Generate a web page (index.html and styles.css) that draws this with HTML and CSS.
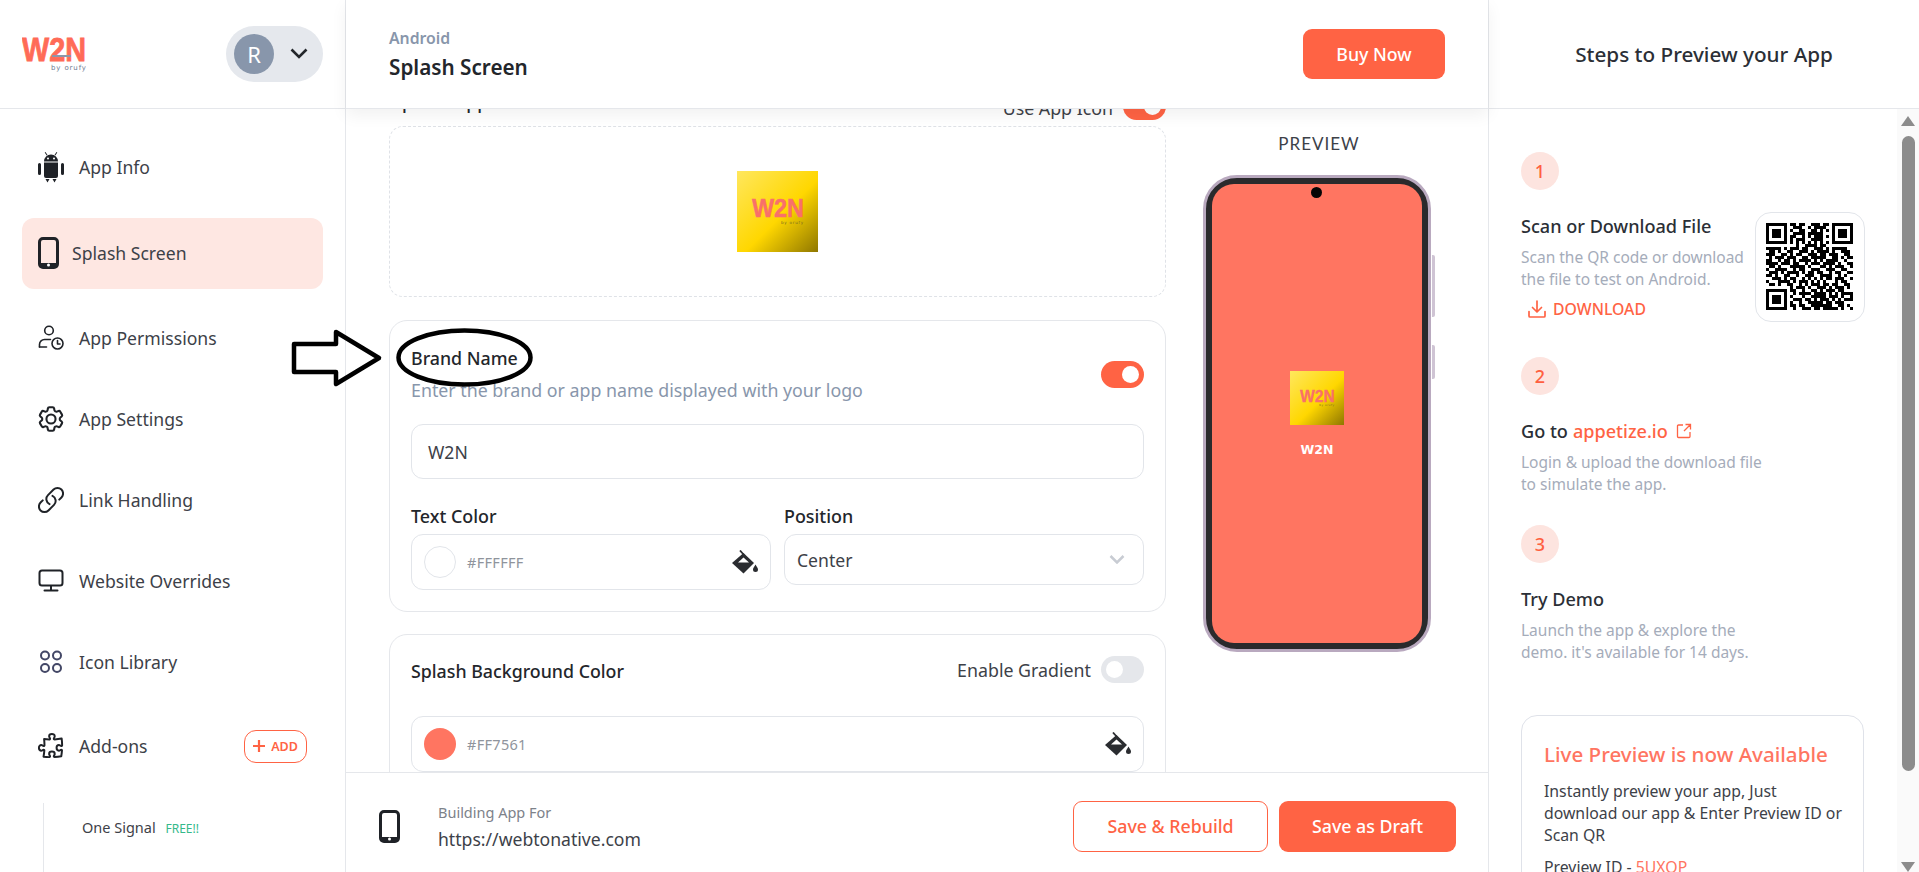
FILE: index.html
```html
<!DOCTYPE html>
<html lang="en">
<head>
<meta charset="utf-8">
<title>Splash Screen</title>
<link rel="stylesheet" href="styles.css">
</head>
<body>
<div class="app">
  <aside class="sidebar">
    <div class="brandbar">
      <svg class="logo" viewBox="0 -6 64 44" aria-label="W2N by orufy">
        <text class="logo-mark" x="0" y="25" textLength="64" lengthAdjust="spacingAndGlyphs">W2N</text>
        <rect class="logo-bar" x="30" y="19" width="19" height="2"/>
        <text class="logo-sub" x="29" y="34" textLength="35">by orufy</text>
      </svg>
      <div class="account">
        <span class="avatar">R</span>
        <svg class="chev" viewBox="0 0 18 11"><path d="M1.500 1.500 9 9l7.500-7.500"/></svg>
      </div>
    </div>
    <nav class="nav">
      <a class="item">
        <svg class="ic" viewBox="0 0 26 32"><path class="fill" d="M6 10.500a7 7 0 0 1 14 0zM6 11.500h14V25a2 2 0 0 1-2 2H8a2 2 0 0 1-2-2zM0 13.500a1.500 1.500 0 0 1 3 0v9a1.500 1.500 0 0 1-3 0zM23 13.500a1.500 1.500 0 0 1 3 0v9a1.500 1.500 0 0 1-3 0zM7.500 28h4l-2 3.500zM14.500 28h4l-2 3.500zM7.500 1l2 3-.8.500-2-3zM18.500 1l-2 3 .8.500 2-3z"/><circle class="eye" cx="10" cy="7.500" r="1"/><circle class="eye" cx="16" cy="7.500" r="1"/></svg>
        <span>App Info</span>
      </a>
      <a class="item active">
        <svg class="ic ic-phone" viewBox="0 0 21 32"><rect class="line thick" x="1.500" y="1.500" width="18" height="29" rx="3.500"/><path class="fill" d="M1 26h19v2a3 3 0 0 1-3 3H4a3 3 0 0 1-3-3z"/><circle class="eye" cx="10.500" cy="28" r="1.500"/></svg>
        <span>Splash Screen</span>
      </a>
      <a class="item">
        <svg class="ic" viewBox="0 0 26 26"><circle class="line" cx="11" cy="5.500" r="4.300"/><path class="line" d="M1.500 22v-2.500c0-3 2.500-5 5-5h6"/><path class="line" d="M1.500 22h7"/><circle class="line" cx="19.500" cy="18.500" r="5.500"/><path class="line" d="M19.500 15.500v3.500h2.500"/></svg>
        <span>App Permissions</span>
      </a>
      <a class="item">
        <svg class="ic" viewBox="2 2 20 20"><path class="line" d="M9.594 3.940c.09-.542.56-.94 1.110-.94h2.593c.55 0 1.020.398 1.110.94l.213 1.281c.063.374.313.686.645.87.074.04.147.083.22.127.324.196.72.257 1.075.124l1.217-.456a1.125 1.125 0 011.370.49l1.296 2.247a1.125 1.125 0 01-.26 1.431l-1.003.827c-.293.24-.438.613-.431.992a6.759 6.759 0 010 .255c-.007.378.138.75.43.99l1.005.828c.424.35.534.954.26 1.430l-1.298 2.247a1.125 1.125 0 01-1.369.491l-1.217-.456c-.355-.133-.75-.072-1.076.124a6.570 6.570 0 01-.22.128c-.331.183-.581.495-.644.869l-.213 1.280c-.09.543-.56.941-1.110.941h-2.594c-.55 0-1.020-.398-1.110-.94l-.213-1.281c-.062-.374-.312-.686-.644-.87a6.520 6.520 0 01-.22-.127c-.325-.196-.72-.257-1.076-.124l-1.217.456a1.125 1.125 0 01-1.369-.49l-1.297-2.247a1.125 1.125 0 01.26-1.431l1.004-.827c.292-.24.437-.613.43-.992a6.932 6.932 0 010-.255c.007-.378-.138-.75-.43-.99l-1.004-.828a1.125 1.125 0 01-.26-1.430l1.297-2.247a1.125 1.125 0 011.370-.491l1.216.456c.356.133.751.072 1.076-.124.072-.044.146-.087.22-.128.332-.183.582-.495.644-.869l.214-1.281z"/><circle class="line" cx="12" cy="12" r="3.500"/></svg>
        <span>App Settings</span>
      </a>
      <a class="item">
        <svg class="ic" viewBox="1.500 1.500 21 21"><path class="line" d="M13.190 8.688a4.500 4.500 0 011.242 7.244l-4.500 4.500a4.500 4.500 0 01-6.364-6.364l1.757-1.757m13.350-.622l1.757-1.757a4.500 4.500 0 00-6.364-6.364l-4.500 4.500a4.500 4.500 0 001.242 7.244"/></svg>
        <span>Link Handling</span>
      </a>
      <a class="item">
        <svg class="ic" viewBox="0 0 26 24"><rect class="line heavy" x="1.500" y="1.500" width="23" height="15" rx="2.500"/><path class="line heavy" d="M13 17v4M6.500 21.500h13"/></svg>
        <span>Website Overrides</span>
      </a>
      <a class="item">
        <svg class="ic" viewBox="0 0 26 26"><g class="dots"><circle cx="7" cy="6.500" r="4"/><circle cx="19" cy="6.500" r="4"/><circle cx="7" cy="19" r="4"/><circle cx="19" cy="19" r="4"/></g></svg>
        <span>Icon Library</span>
      </a>
      <a class="item addon">
        <svg class="ic" viewBox="1.500 1.500 21 21"><path class="line" d="M14.250 6.087c0-.355.186-.676.401-.959.221-.29.349-.634.349-1.003 0-1.036-1.007-1.875-2.250-1.875s-2.250.84-2.250 1.875c0 .369.128.713.349 1.003.215.283.401.604.401.959a.64.64 0 01-.657.643 48.390 48.390 0 01-4.163-.3c.186 1.613.293 3.250.315 4.907a.656.656 0 01-.658.663c-.355 0-.676-.186-.959-.401a1.647 1.647 0 00-1.003-.349c-1.036 0-1.875 1.007-1.875 2.250s.84 2.250 1.875 2.250c.369 0 .713-.128 1.003-.349.283-.215.604-.401.959-.401.31 0 .555.26.532.57a48.039 48.039 0 01-.642 5.056c1.518.19 3.058.309 4.616.354a.64.64 0 00.657-.643c0-.355-.186-.676-.401-.959a1.647 1.647 0 01-.349-1.003c0-1.035 1.008-1.875 2.250-1.875 1.243 0 2.250.84 2.250 1.875 0 .369-.128.713-.349 1.003-.215.283-.4.604-.4.959 0 .333.277.599.61.58a48.100 48.100 0 005.427-.63 48.050 48.050 0 00.582-4.717.532.532 0 00-.533-.57c-.355 0-.676.186-.959.401-.29.221-.634.349-1.003.349-1.035 0-1.875-1.007-1.875-2.250s.84-2.250 1.875-2.250c.37 0 .713.128 1.003.349.283.215.604.401.96.401a.656.656 0 00.658-.663 48.422 48.422 0 00-.37-5.360c-1.886.342-3.810.574-5.766.689a.578.578 0 01-.61-.58z"/></svg>
        <span>Add-ons</span>
        <span class="add"><svg class="plus" viewBox="0 0 12 12"><path d="M6 0v12M0 6h12"/></svg>ADD</span>
      </a>
      <div class="sublist">
        <div class="sub">One Signal <span class="free">FREE!!</span></div>
        <div class="sub">Orufy Connect</div>
      </div>
    </nav>
  </aside>

  <main class="main">
    <header class="topbar">
      <div>
        <div class="crumb">Android</div>
        <h1 class="page-title">Splash Screen</h1>
      </div>
      <button class="btn btn-primary btn-buy">Buy Now</button>
    </header>

    <div class="canvas">
      <section class="form">
        <div class="row-between">
          <span class="label label-clipped">Upload App Icon</span>
          <span class="toggle-line"><span class="toggle-text">Use App Icon</span> <span class="toggle on"></span></span>
        </div>
        <div class="dropzone">
          <svg class="app-img" viewBox="0 0 81 81" aria-label="App icon">
            <defs><linearGradient id="gold" x1="0" y1="0" x2="1" y2="1"><stop offset="0" stop-color="#ffe75e"/><stop offset=".55" stop-color="#ffd700"/><stop offset="1" stop-color="#8f7700"/></linearGradient></defs>
            <rect width="81" height="81" fill="url(#gold)"/>
            <text class="logo-mark tint" x="15" y="46" textLength="52" lengthAdjust="spacingAndGlyphs">W2N</text>
            <text class="img-sub" x="44" y="53" textLength="22">by orufy</text>
          </svg>
        </div>

        <div class="card">
          <div class="row-between">
            <div>
              <div class="label">Brand Name</div>
              <div class="hint">Enter the brand or app name displayed with your logo</div>
            </div>
            <span class="toggle on"></span>
          </div>
          <div class="field field-text">W2N</div>
          <div class="two-col">
            <div>
              <div class="field-label">Text Color</div>
              <div class="field field-color">
                <span class="swatch swatch-white"></span>
                <span class="hex">#FFFFFF</span>
                <svg class="bucket" viewBox="0 0 27 24"><path d="M9 .5 13 5"/><polygon points="12.500,3 23,13 12.500,23.500 1,13"/><polygon class="bucket-in" points="12.500,7.500 18,12.500 7,12.500"/><path class="drop" d="M24.500 14.500c-1.500 2.500-2.500 3.500-2.500 5a2.500 2.500 0 0 0 5 0c0-1.500-1-2.500-2.500-5z"/></svg>
              </div>
            </div>
            <div>
              <div class="field-label">Position</div>
              <div class="field field-select">
                <span>Center</span>
                <svg class="select-chev" viewBox="0 0 16 9"><path d="M1.500 1 8 7.500 14.500 1"/></svg>
              </div>
            </div>
          </div>
        </div>

        <div class="card card-bg">
          <div class="row-between">
            <span class="label">Splash Background Color</span>
            <span class="toggle-line">Enable Gradient <span class="toggle"></span></span>
          </div>
          <div class="field field-color field-bg">
            <span class="swatch swatch-coral"></span>
            <span class="hex">#FF7561</span>
            <svg class="bucket" viewBox="0 0 27 24"><path d="M9 .5 13 5"/><polygon points="12.500,3 23,13 12.500,23.500 1,13"/><polygon class="bucket-in" points="12.500,7.500 18,12.500 7,12.500"/><path class="drop" d="M24.500 14.500c-1.500 2.500-2.500 3.500-2.500 5a2.500 2.500 0 0 0 5 0c0-1.500-1-2.500-2.500-5z"/></svg>
          </div>
        </div>
      </section>

      <section class="preview">
        <div class="preview-title">PREVIEW</div>
        <div class="phone">
          <span class="side side-a"></span>
          <span class="side side-b"></span>
          <div class="screen">
            <span class="camera"></span>
            <svg class="screen-img" viewBox="0 0 81 81" aria-label="App icon">
              <rect width="81" height="81" fill="url(#gold)"/>
              <text class="logo-mark tint" x="15" y="46" textLength="52" lengthAdjust="spacingAndGlyphs">W2N</text>
              <text class="img-sub" x="44" y="53" textLength="22">by orufy</text>
            </svg>
            <div class="screen-name">W2N</div>
          </div>
        </div>
      </section>
    </div>

    <footer class="footer">
      <svg class="foot-phone" viewBox="0 0 21 33"><rect class="line thick" x="1.500" y="1.500" width="18" height="30" rx="3.500"/><path class="fill" d="M1 27h19v2a3 3 0 0 1-3 3H4a3 3 0 0 1-3-3z"/><circle class="eye" cx="10.500" cy="29" r="1.500"/></svg>
      <div class="foot-text">
        <div class="foot-small">Building App For</div>
        <div class="foot-url">https://webtonative.com</div>
      </div>
      <div class="foot-actions">
        <button class="btn btn-outline">Save &amp; Rebuild</button>
        <button class="btn btn-primary btn-draft">Save as Draft</button>
      </div>
    </footer>
  </main>

  <aside class="steps">
    <div class="steps-head">Steps to Preview your App</div>
    <div class="steps-body">
      <div class="steps-scroll">
        <div class="num">1</div>
        <div class="step-one">
          <div class="step-one-text">
            <div class="step-name">Scan or Download File</div>
            <p class="step-desc">Scan the QR code or download<br>the file to test on Android.</p>
            <a class="download">
              <svg class="dl-ic" viewBox="0 0 18 18"><path d="M9 1v10.500M4.500 7.500 9 12l4.500-4.500M1 11.500V16a1 1 0 0 0 1 1h14a1 1 0 0 0 1-1v-4.500"/></svg>
              DOWNLOAD
            </a>
          </div>
          <div class="qr-box">
            <svg class="qr" viewBox="0 0 29 29" aria-label="QR code"><path d="M0 .5h7M8 .5h2M11 .5h2M15 .5h3M19 .5h2M22 .5h7M0 1.500h1M6 1.500h1M9 1.500h3M14 1.500h1M16 1.500h4M22 1.500h1M28 1.500h1M0 2.500h1M2 2.500h3M6 2.500h1M8 2.500h1M11 2.500h2M15 2.500h2M18 2.500h1M20 2.500h1M22 2.500h1M24 2.500h3M28 2.500h1M0 3.500h1M2 3.500h3M6 3.500h1M9 3.500h4M14 3.500h5M22 3.500h1M24 3.500h3M28 3.500h1M0 4.500h1M2 4.500h3M6 4.500h1M8 4.500h2M12 4.500h1M14 4.500h1M16 4.500h3M20 4.500h1M22 4.500h1M24 4.500h3M28 4.500h1M0 5.500h1M6 5.500h1M8 5.500h1M10 5.500h3M15 5.500h4M22 5.500h1M28 5.500h1M0 6.500h7M8 6.500h1M10 6.500h1M12 6.500h1M14 6.500h1M16 6.500h1M18 6.500h1M20 6.500h1M22 6.500h7M10 7.500h1M13 7.500h4M18 7.500h2M0 8.500h5M6 8.500h1M8 8.500h3M12 8.500h2M16 8.500h3M20 8.500h1M22 8.500h5M1 9.500h2M4 9.500h1M7 9.500h2M11 9.500h3M15 9.500h1M17 9.500h4M22 9.500h1M25 9.500h3M0 10.500h3M5 10.500h2M8 10.500h1M10 10.500h2M14 10.500h3M18 10.500h2M21 10.500h3M26 10.500h2M1 11.500h1M3 11.500h3M7 11.500h3M12 11.500h2M15 11.500h5M22 11.500h2M25 11.500h1M27 11.500h2M0 12.500h2M4 12.500h1M6 12.500h2M9 12.500h1M11 12.500h4M16 12.500h1M18 12.500h1M20 12.500h4M26 12.500h1M0 13.500h4M5 13.500h3M9 13.500h2M13 13.500h1M15 13.500h3M19 13.500h4M24 13.500h1M27 13.500h2M1 14.500h2M4 14.500h1M8 14.500h5M14 14.500h1M18 14.500h2M21 14.500h1M23 14.500h3M28 14.500h1M0 15.500h1M3 15.500h4M9 15.500h1M11 15.500h2M15 15.500h3M20 15.500h3M25 15.500h2M1 16.500h3M5 16.500h1M7 16.500h4M12 16.500h1M14 16.500h2M17 16.500h2M21 16.500h1M23 16.500h2M27 16.500h2M0 17.500h2M3 17.500h1M6 17.500h2M10 17.500h1M13 17.500h3M18 17.500h4M24 17.500h1M26 17.500h1M2 18.500h3M6 18.500h1M8 18.500h2M12 18.500h1M14 18.500h1M16 18.500h1M18 18.500h1M20 18.500h2M23 18.500h3M28 18.500h1M0 19.500h1M4 19.500h4M9 19.500h1M11 19.500h3M15 19.500h1M17 19.500h1M19 19.500h1M23 19.500h1M25 19.500h2M1 20.500h2M4 20.500h1M7 20.500h2M11 20.500h1M13 20.500h1M15 20.500h3M19 20.500h2M22 20.500h2M26 20.500h2M8 21.500h1M10 21.500h3M14 21.500h1M17 21.500h3M21 21.500h1M23 21.500h3M27 21.500h1M0 22.500h7M8 22.500h2M12 22.500h1M15 22.500h2M18 22.500h1M20 22.500h3M24 22.500h2M0 23.500h1M6 23.500h1M9 23.500h1M11 23.500h4M16 23.500h4M21 23.500h1M23 23.500h1M25 23.500h4M0 24.500h1M2 24.500h3M6 24.500h1M8 24.500h1M12 24.500h1M15 24.500h5M21 24.500h3M25 24.500h1M28 24.500h1M0 25.500h1M2 25.500h3M6 25.500h1M9 25.500h3M13 25.500h2M16 25.500h1M18 25.500h3M22 25.500h1M24 25.500h1M26 25.500h3M0 26.500h1M2 26.500h3M6 26.500h1M8 26.500h1M11 26.500h1M14 26.500h5M20 26.500h2M23 26.500h3M0 27.500h1M6 27.500h1M8 27.500h2M11 27.500h2M15 27.500h7M24 27.500h2M27 27.500h1M0 28.500h7M9 28.500h1M12 28.500h3M16 28.500h2M19 28.500h5M25 28.500h1M28 28.500h1"/></svg>
          </div>
        </div>

        <div class="num num-two">2</div>
        <div class="step-name step-gap">Go to <span class="coral">appetize.io</span>
          <svg class="ext" viewBox="0 0 16 16"><path d="M7 2H2.500A1 1 0 0 0 1.500 3v10.500a1 1 0 0 0 1 1H13a1 1 0 0 0 1-1V9M9.500 1.500h5v5M14.500 1.500 8 8"/></svg>
        </div>
        <p class="step-desc">Login &amp; upload the download file<br>to simulate the app.</p>

        <div class="num num-three">3</div>
        <div class="step-name step-gap">Try Demo</div>
        <p class="step-desc">Launch the app &amp; explore the<br>demo. it's available for 14 days.</p>

        <div class="live-card">
          <div class="live-title">Live Preview is now Available</div>
          <p class="live-text">Instantly preview your app, Just<br>download our app &amp; Enter Preview ID or<br>Scan QR</p>
          <p class="live-id">Preview ID - <span class="coral-soft">5UXOP</span></p>
        </div>
      </div>
      <div class="scrollbar">
        <span class="arrow arrow-up"></span>
        <span class="thumb"></span>
        <span class="arrow arrow-down"></span>
      </div>
    </div>
  </aside>
</div>

<svg class="annotation" viewBox="0 0 1919 872" aria-hidden="true">
  <polygon points="294,344 336,344 336,332 379,358 336,384 336,372 294,372"/>
  <ellipse cx="464.500" cy="357.500" rx="66" ry="27"/>
</svg>
</body>
</html>
```

FILE: styles.css
```css
* { box-sizing: border-box; }
html, body { margin: 0; height: 100%; }
body {
  font-family: "Noto Sans", "Open Sans", sans-serif;
  color: #2b2f36;
  background: #fff;
  overflow: hidden;
  position: relative;
}
p { margin: 0; }
button { font-family: inherit; cursor: pointer; }

.app { display: flex; height: 872px; width: 1919px; }

/* Shared icon parts */
.line { fill: none; stroke: #1f2227; stroke-width: 1.600; stroke-linecap: round; stroke-linejoin: round; }
.line.heavy { stroke-width: 2; }
.line.thick { stroke-width: 3; }
.fill { fill: #1f2227; }
.eye { fill: #fff; }

/* Sidebar */
.sidebar { width: 346px; flex: none; border-right: 1px solid #e5e7eb; overflow: hidden; }
.brandbar {
  height: 109px;
  border-bottom: 1px solid #e5e7eb;
  display: flex;
  align-items: center;
  justify-content: space-between;
  padding: 0 22px;
}
.logo { width: 64px; height: 44px; margin-top: -4px; }
.logo-mark { font-family: "Liberation Sans", sans-serif; font-weight: 700; font-size: 34px; fill: #ff6b57; stroke: #ff6b57; stroke-width: .8px; }
.logo-bar { fill: #8c97a8; }
.logo-sub { font-family: "DejaVu Sans", sans-serif; font-size: 7px; fill: #6d7c92; }
.account {
  width: 97px;
  height: 56px;
  margin-top: -1px;
  border-radius: 28px;
  background: #e5e8ed;
  display: flex;
  align-items: center;
  padding-left: 8px;
  gap: 16px;
}
.avatar {
  width: 40px;
  height: 40px;
  border-radius: 50%;
  background: #8896ab;
  color: #fff;
  font-size: 22px;
  display: flex;
  align-items: center;
  justify-content: center;
}
.chev { width: 18px; height: 11px; fill: none; stroke: #23262b; stroke-width: 2.600; }

.nav { padding: 23px 22px 0; display: flex; flex-direction: column; gap: 10px; }
.item {
  height: 71px;
  display: flex;
  align-items: center;
  gap: 15px;
  padding-left: 16px;
  padding-bottom: 1px;
  font-size: 17.600px;
  color: #3d4148;
  border-radius: 12px;
  flex: none;
}
.ic { width: 26px; height: 32px; flex: none; }
.item.active { background: #fee7e2; margin: 5px 0 4px; gap: 13px; }
.ic-phone { width: 21px; }
.dots { fill: none; stroke: #434766; stroke-width: 2; }
.addon { margin-top: 3px; height: 71px; position: relative; }
.add {
  margin-left: auto;
  margin-right: 16px;
  width: 63px;
  height: 33px;
  border: 1px solid #ff6344;
  border-radius: 12px;
  color: #ff6344;
  font-size: 12.500px;
  font-weight: 600;
  display: flex;
  align-items: center;
  justify-content: center;
  gap: 6px;
}
.plus { width: 12px; height: 12px; fill: none; stroke: #ff6344; stroke-width: 2.200; }
.sublist {
  margin: 11px 0 0 21px;
  padding: 12px 0 0 38px;
  border-left: 1px solid #e5e7eb;
  height: 100px;
  display: flex;
  flex-direction: column;
  gap: 24px;
}
.sub { font-size: 14.500px; line-height: 24px; color: #3d4148; }
.free { color: #34b98a; font-size: 12px; margin-left: 6px; }

/* Main column */
.main { width: 1143px; flex: none; display: flex; flex-direction: column; border-right: 1px solid #e5e7eb; }
.topbar {
  height: 109px;
  flex: none;
  display: flex;
  align-items: center;
  justify-content: space-between;
  padding: 0 43px 0 43px;
  border-bottom: 1px solid #e5e7eb;
  box-shadow: 0 6px 16px rgba(0, 0, 0, .06);
  background: #fff;
  position: relative;
  z-index: 2;
}
.crumb { font-size: 15.800px; font-weight: 600; color: #8896ab; line-height: 20px; }
.page-title { margin: 5px 0 0; font-size: 20.700px; font-weight: 600; line-height: 28px; color: #23262b; }
.btn { border-radius: 9px; font-size: 17.800px; font-weight: 500; height: 51px; }
.btn-primary { background: #ff6344; border: 0; color: #fff; }
.btn-buy { width: 142px; height: 50px; margin-top: -1px; }
.btn-draft { width: 177px; }
.btn-outline { width: 195px; background: #fff; border: 1px solid #ff6344; color: #ff6344; }

.canvas { flex: 1; min-height: 0; overflow: hidden; display: flex; padding-left: 43px; }
.form { width: 777px; flex: none; margin-top: -16px; }
.row-between { display: flex; justify-content: space-between; align-items: center; }
.label { font-size: 17.800px; font-weight: 500; line-height: 24px; color: #23262b; }
.label-clipped { align-self: flex-start; margin-top: -3px; }
.toggle-line { display: flex; align-items: center; gap: 10px; font-size: 17.800px; color: #3d4148; }
.toggle-text { margin-top: 3px; }
.toggle {
  width: 43px;
  height: 27px;
  border-radius: 14px;
  background: #e5e7eb;
  flex: none;
  display: flex;
  align-items: center;
  padding: 0 5px;
}
.toggle::after { content: ""; width: 17px; height: 17px; border-radius: 50%; background: #fff; }
.toggle.on { background: #ff6344; justify-content: flex-end; }

.dropzone {
  margin-top: 6px;
  height: 171px;
  border: 1px dashed #dfe2e7;
  border-radius: 14px;
  display: flex;
  justify-content: center;
  padding-top: 44px;
}
.app-img { width: 81px; height: 81px; }
.logo-mark.tint { font-size: 26px; fill: #f9706a; stroke: #f9706a; stroke-width: .5px; }
.img-sub { font-family: "DejaVu Sans", sans-serif; font-size: 4px; fill: #7a6a20; }

.card {
  margin-top: 22px;
  border: 1px solid #e5e7eb;
  border-radius: 18px;
  padding: 25px 21px 21px;
  height: 292px;
}
.form .dropzone + .card { margin-top: 23px; }
.hint { margin-top: 8px; font-size: 17.800px; line-height: 24px; color: #8896ab; }
.field {
  border: 1px solid #e2e5ea;
  border-radius: 12px;
  display: flex;
  align-items: center;
  font-size: 17.600px;
  color: #3d4148;
  background: #fff;
}
.field-text { margin-top: 22px; height: 55px; padding-left: 16px; }
.two-col { display: grid; grid-template-columns: 360px 360px; column-gap: 13px; margin-top: 25px; align-items: start; }
.field-label { font-size: 17.900px; font-weight: 500; line-height: 24px; margin-bottom: 6px; color: #23262b; }
.field-color { height: 56px; padding: 0 12px; }
.field-select { height: 51px; padding: 0 18px 0 12px; justify-content: space-between; }
.select-chev { width: 16px; height: 9px; fill: none; stroke: #c8ccd3; stroke-width: 2.500; }
.swatch { width: 32px; height: 32px; border-radius: 50%; flex: none; }
.swatch-white { background: #fff; border: 1px solid #e2e5ea; }
.swatch-coral { background: #ff7561; }
.hex { margin-left: 11px; font-size: 14.500px; color: #8f949c; letter-spacing: .3px; }
.bucket { width: 27px; height: 24px; margin-left: auto; fill: #2a2c30; stroke: none; }
.bucket > path:first-child { fill: none; stroke: #2a2c30; stroke-width: 1.800; }
.bucket-in { fill: #fff; }

.card-bg { padding: 21px 21px 0; height: 200px; }
.card-bg .label { margin-top: 3px; }
.field-bg { margin-top: 33px; }

/* Preview */
.preview { flex: 1; display: flex; flex-direction: column; padding-left: 37px; }
.preview-title {
  font-family: "Lato", sans-serif;
  font-size: 17px;
  letter-spacing: 1px;
  line-height: 20px;
  text-align: center;
  width: 232px;
  margin-top: 25px;
  color: #3d4148;
}
.phone {
  margin-top: 21px;
  width: 228px;
  height: 477px;
  padding: 6px;
  border: 3px solid #b9a9bf;
  border-radius: 34px;
  background: #2a2a2c;
  position: relative;
}
.side { position: absolute; left: 226px; width: 3px; background: #cfc4d4; border-radius: 0 2px 2px 0; }
.side-a { top: 77px; height: 62px; }
.side-b { top: 167px; height: 34px; }
.screen {
  height: 100%;
  border-radius: 22px;
  background: #ff7561;
  display: flex;
  flex-direction: column;
  align-items: center;
  position: relative;
  padding-top: 187px;
}
.camera { position: absolute; top: 3px; left: 99px; width: 11px; height: 11px; border-radius: 50%; background: #050505; }
.screen-img { width: 54px; height: 54px; }
.screen-name {
  font-family: "DejaVu Sans", sans-serif;
  font-weight: 700;
  font-size: 12.500px;
  line-height: 18px;
  margin-top: 16px;
  color: #fff;
}

/* Footer */
.footer {
  height: 100px;
  flex: none;
  border-top: 1px solid #e5e7eb;
  background: #fff;
  display: flex;
  align-items: center;
  padding: 7px 32px 0 33px;
  position: relative;
  z-index: 2;
}
.foot-phone { width: 21px; height: 33px; flex: none; }
.foot-text { margin-left: 38px; }
.foot-small { font-size: 14.500px; line-height: 20px; color: #7d828a; }
.foot-url { margin-top: 5px; font-size: 17.600px; line-height: 24px; color: #3d4148; }
.foot-actions { margin-left: auto; display: flex; gap: 11px; }

/* Steps panel */
.steps { flex: 1; min-width: 0; display: flex; flex-direction: column; }
.steps-head {
  height: 109px;
  flex: none;
  border-bottom: 1px solid #e5e7eb;
  display: flex;
  align-items: center;
  justify-content: center;
  font-size: 20.700px;
  font-weight: 500;
  color: #2b2f36;
}
.steps-body { flex: 1; min-height: 0; display: flex; }
.steps-scroll { width: 408px; flex: none; overflow: hidden; padding: 43px 33px 0 32px; }
.num {
  width: 38px;
  height: 38px;
  border-radius: 50%;
  background: #fde4df;
  color: #ff5f40;
  font-size: 18px;
  font-weight: 500;
  display: flex;
  align-items: center;
  justify-content: center;
}
.num-two { margin-top: 35px; }
.num-three { margin-top: 30px; }
.step-one { display: flex; margin-top: 22px; }
.step-one-text { width: 234px; flex: none; padding-top: 2px; }
.step-name { font-size: 18.100px; font-weight: 500; line-height: 24px; color: #2b2f36; display: flex; align-items: center; gap: 5px; }
.step-gap { margin-top: 24px; }
.step-desc { margin-top: 8px; font-size: 15.500px; line-height: 22px; color: #a5acba; white-space: nowrap; }
.coral { color: #ff6344; }
.coral-soft { color: #ff7561; }
.ext { width: 16px; height: 16px; margin-left: 3px; fill: none; stroke: #ff6344; stroke-width: 1.300; }
.download {
  margin: 9px 0 0 7px;
  display: flex;
  align-items: center;
  gap: 7px;
  font-size: 15.800px;
  font-weight: 500;
  line-height: 20px;
  color: #ff6344;
}
.dl-ic { width: 18px; height: 18px; fill: none; stroke: #ff6344; stroke-width: 1.700; stroke-linecap: round; stroke-linejoin: round; }
.qr-box {
  width: 110px;
  height: 110px;
  flex: none;
  border: 1px solid #e2e5ea;
  border-radius: 16px;
  padding: 10px;
}
.qr { width: 87px; height: 87px; display: block; fill: none; stroke: #000; stroke-width: 1; }
.live-card {
  margin-top: 52px;
  width: 343px;
  height: 200px;
  border: 1px solid #dfe2e9;
  border-radius: 16px;
  padding: 24px 22px 0;
}
.live-title { font-size: 20.600px; font-weight: 500; line-height: 28px; color: #ff7561; white-space: nowrap; }
.live-text { margin-top: 12px; font-size: 15.800px; line-height: 22px; color: #3d4148; white-space: nowrap; }
.live-id { margin-top: 10px; font-size: 15.800px; line-height: 22px; color: #3d4148; }

.scrollbar { flex: 1; background: #fafafa; display: flex; flex-direction: column; align-items: center; padding: 7px 0 0; position: relative; }
.thumb { width: 13px; height: 635px; margin-top: 10px; background: #8c8c8c; border-radius: 7px; flex: none; }
.arrow { width: 0; height: 0; border-left: 7px solid transparent; border-right: 7px solid transparent; flex: none; }
.arrow-up { border-bottom: 10px solid #8c8c8c; }
.arrow-down { border-top: 10px solid #8c8c8c; margin-top: auto; }

/* Hand-drawn annotation lying over the page */
.annotation { position: absolute; left: 0; top: 0; width: 1919px; height: 872px; pointer-events: none; z-index: 5; fill: none; stroke: #000; stroke-width: 4.500; stroke-linejoin: round; }
```
